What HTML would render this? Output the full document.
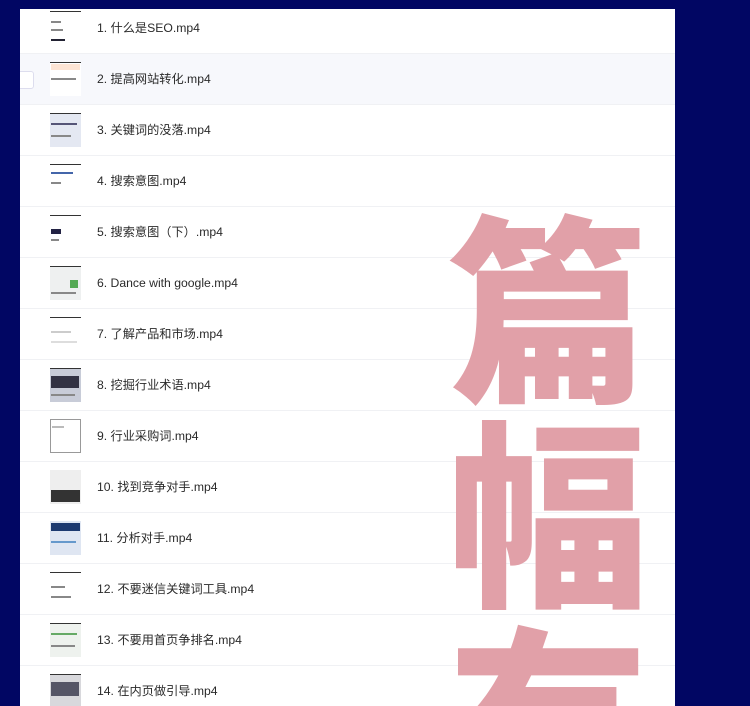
<!DOCTYPE html>
<html><head><meta charset="utf-8"><style>
html,body{margin:0;padding:0;overflow:hidden}
body{width:750px;height:706px;background:#010663;position:relative;overflow:hidden;font-family:"Liberation Sans","Noto Sans CJK SC",sans-serif}
.panel{position:absolute;left:20px;top:9px;width:655px;height:697px;background:#fff;overflow:hidden}
.row{position:absolute;left:0;width:655px;height:51px;border-bottom:1px solid #f0f1f4;box-sizing:border-box}
.row.hl{background:#f7f8fc}
.th{position:absolute;left:30px;top:8px;width:31px;height:34px;background:#fff}
.th i{position:absolute;left:0;top:0;width:31px;height:1px;background:#333}
.th b{position:absolute;left:1px;height:2px;background:#888}
.t{position:absolute;left:77px;top:0;line-height:51px;font-size:12.2px;color:#2a2a2a}
.wm{position:absolute;left:428px;top:188px;font-family:"Noto Sans CJK SC",sans-serif;font-weight:900;font-size:200px;line-height:205px;color:#e1a0a8;width:210px}
.cb{position:absolute;left:-6px;top:17px;width:18px;height:16px;border:1px solid #dde;border-radius:3px;background:#fff}
</style></head><body>
<div class="panel">
<div class="row" style="top:-6px"><div class="th"><i></i><b style="top:10px;width:10px"></b><b style="top:18px;width:12px"></b><b style="top:28px;width:14px;background:#223"></b></div><div class="t">1. 什么是SEO.mp4</div></div>
<div class="row hl" style="top:45px"><div class="cb"></div><div class="th" style="background:#fff"><i></i><b style="top:2px;width:29px;height:6px;background:#fde4d4"></b><b style="top:16px;width:25px"></b></div><div class="t">2. 提高网站转化.mp4</div></div>
<div class="row" style="top:96px"><div class="th" style="background:#e4e8f2"><i></i><b style="top:10px;width:26px;background:#557"></b><b style="top:22px;width:20px"></b></div><div class="t">3. 关键词的没落.mp4</div></div>
<div class="row" style="top:147px"><div class="th"><i></i><b style="top:8px;width:22px;background:#46a"></b><b style="top:18px;width:10px"></b></div><div class="t">4. 搜索意图.mp4</div></div>
<div class="row" style="top:198px"><div class="th"><i></i><b style="top:14px;width:10px;height:5px;background:#224"></b><b style="top:24px;width:8px"></b></div><div class="t">5. 搜索意图（下）.mp4</div></div>
<div class="row" style="top:249px"><div class="th" style="background:#eef0f0"><i></i><b style="top:14px;left:20px;width:8px;height:8px;background:#5a5"></b><b style="top:26px;width:25px"></b></div><div class="t">6. Dance with google.mp4</div></div>
<div class="row" style="top:300px"><div class="th"><i></i><b style="top:14px;width:20px;background:#ccc"></b><b style="top:24px;width:26px;background:#ddd"></b></div><div class="t">7. 了解产品和市场.mp4</div></div>
<div class="row" style="top:351px"><div class="th" style="background:#c8ccd8"><i></i><b style="top:8px;width:28px;height:12px;background:#334"></b><b style="top:26px;width:24px"></b></div><div class="t">8. 挖掘行业术语.mp4</div></div>
<div class="row" style="top:402px"><div class="th" style="border:1px solid #999;box-sizing:border-box"><b style="top:6px;width:12px;background:#bbb"></b></div><div class="t">9. 行业采购词.mp4</div></div>
<div class="row" style="top:453px"><div class="th" style="background:#eee"><b style="top:20px;width:29px;height:12px;background:#333"></b></div><div class="t">10. 找到竞争对手.mp4</div></div>
<div class="row" style="top:504px"><div class="th" style="background:#dfe6f2"><b style="top:2px;width:29px;height:8px;background:#1d3a70"></b><b style="top:20px;width:25px;background:#69c"></b></div><div class="t">11. 分析对手.mp4</div></div>
<div class="row" style="top:555px"><div class="th"><i></i><b style="top:14px;width:14px"></b><b style="top:24px;width:20px"></b></div><div class="t">12. 不要迷信关键词工具.mp4</div></div>
<div class="row" style="top:606px"><div class="th" style="background:#eef2ee"><i></i><b style="top:10px;width:26px;background:#6a6"></b><b style="top:22px;width:24px"></b></div><div class="t">13. 不要用首页争排名.mp4</div></div>
<div class="row" style="top:657px;height:40px;border:0"><div class="th" style="background:#d8d8dc"><i></i><b style="top:8px;width:28px;height:14px;background:#556"></b></div><div class="t">14. 在内页做引导.mp4</div></div>
<div class="wm" style="height:509px;overflow:hidden">篇幅有</div>
</div>
</body></html>
